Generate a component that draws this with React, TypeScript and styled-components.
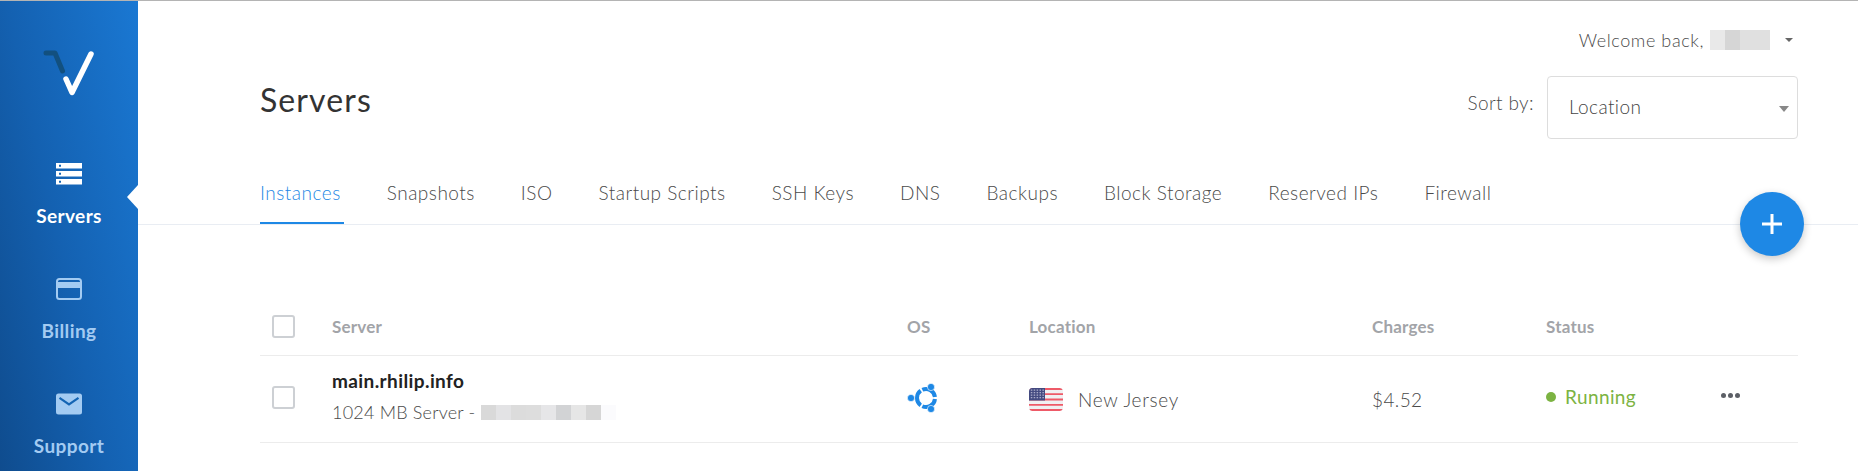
import React from "react";
import styled, { createGlobalStyle } from "styled-components";

const GlobalStyle = createGlobalStyle`
  html, body {
    margin: 0;
    padding: 0;
    background: #fff;
  }
  * {
    box-sizing: border-box;
  }
`;

const TABS = ["Instances", "Snapshots", "ISO", "Startup Scripts", "SSH Keys", "DNS", "Backups", "Block Storage", "Reserved IPs", "Firewall"];
const NAME_BLUR = ["#e9e9e9", "#d6d6d6", "#e0e0e0", "#e0e0e0"];
const IP_BLUR = ["#d9d9d9", "#e3e3e5", "#dcdcdc", "#dddddd", "#e6e6e8", "#d2d3d5", "#e6e6e6", "#d6d6d6", "#fbfbfd"];

export default function App() {
  return (
    <Shell>
      <GlobalStyle />
      <Sidebar>
        <LogoWrap>
          <Logo />
        </LogoWrap>
        <NavItem $active>
          <ServerIcon />
          <NavLabel>Servers</NavLabel>
          <ActiveArrow />
        </NavItem>
        <NavItem>
          <CardIcon />
          <NavLabel>Billing</NavLabel>
        </NavItem>
        <NavItem>
          <MailIcon />
          <NavLabel>Support</NavLabel>
        </NavItem>
      </Sidebar>
      <Main>
        <Head>
          <UserRow>
            <Welcome>Welcome back,</Welcome>
            <BlurStrip $height={20}>
              {NAME_BLUR.map((c, i) => (
                <BlurCell key={i} $tone={c} />
              ))}
            </BlurStrip>
            <UserCaret />
          </UserRow>
          <TitleRow>
            <Title>Servers</Title>
            <SortWrap>
              <SortLabel>Sort by:</SortLabel>
              <SelectBox>
                Location
                <SelectCaret />
              </SelectBox>
            </SortWrap>
          </TitleRow>
        </Head>
        <TabBar>
          {TABS.map((t, i) => (
            <Tab key={t} $active={i === 0}>
              {t}
            </Tab>
          ))}
        </TabBar>
        <AddButton>
          <svg width="20" height="20" viewBox="0 0 20 20">
            <path d="M10 0v20M0 10h20" stroke="#fff" strokeWidth="3" />
          </svg>
        </AddButton>
        <Table>
          <HeaderRow>
            <CheckBox />
            <HeaderCell>Server</HeaderCell>
            <HeaderCell>OS</HeaderCell>
            <HeaderCell>Location</HeaderCell>
            <HeaderCell>Charges</HeaderCell>
            <HeaderCell>Status</HeaderCell>
            <span />
          </HeaderRow>
          <BodyRow>
            <CheckBox $raised />
            <ServerCell>
              <ServerName>main.rhilip.info</ServerName>
              <ServerMeta>
                1024 MB Server -
                <BlurStrip $height={15}>
                  {IP_BLUR.map((c, i) => (
                    <BlurCell key={i} $tone={c} />
                  ))}
                </BlurStrip>
              </ServerMeta>
            </ServerCell>
            <UbuntuIcon />
            <LocationCell>
              <UsFlag />
              New Jersey
            </LocationCell>
            <PlainCell>$4.52</PlainCell>
            <StatusCell>
              <StatusDot />
              Running
            </StatusCell>
            <MoreDots>
              <i />
              <i />
              <i />
            </MoreDots>
          </BodyRow>
        </Table>
      </Main>
    </Shell>
  );
}

function Logo() {
  return (
    <svg width="60" height="54" viewBox="0 0 60 54" fill="none">
      <path d="M7 5h9l7.500 18" stroke="#12507f" strokeWidth="5" strokeLinecap="round" strokeLinejoin="round" />
      <path d="M27 31l6 13.500L52 6" stroke="#fff" strokeWidth="5.500" strokeLinecap="round" strokeLinejoin="round" />
    </svg>
  );
}

function ServerIcon() {
  return (
    <IconSvg viewBox="0 0 26 22">
      <path fill="#fff" d="M0 0h26v5.500H0zM0 8h26v5.500H0zM0 16h26v5.500H0z" />
      <path fill="#1465b4" d="M3 1.800h2v2H3zM3 9.800h2v2H3zM3 17.800h2v2H3z" />
    </IconSvg>
  );
}

function CardIcon() {
  return (
    <IconSvg viewBox="0 0 26 22">
      <rect x="1" y="1" width="24" height="20" rx="2.500" fill="none" stroke="#a3cbf2" strokeWidth="2" />
      <path fill="#a3cbf2" d="M2 4h22v6H2z" />
    </IconSvg>
  );
}

function MailIcon() {
  return (
    <IconSvg viewBox="0 0 26 22">
      <rect width="26" height="21" y="0.500" rx="2.500" fill="#a3cbf2" />
      <path d="M3.500 4.800l9.500 6.500 9.500-6.500" fill="none" stroke="#1465b4" strokeWidth="2.200" />
    </IconSvg>
  );
}

function UbuntuIcon() {
  return (
    <UbuntuSvg viewBox="0 0 30 30" fill="none">
      <g stroke="#1e88e5" strokeWidth="4">
        <path d="M27.950 14.060A9 9 0 0 0 15.340 6.780" />
        <path d="M13.710 7.720A9 9 0 0 0 13.710 22.280" />
        <path d="M27.950 15.940A9 9 0 0 1 15.340 23.220" />
      </g>
      <g fill="#1e88e5" stroke="#fff" strokeWidth="0.600">
        <circle cx="4" cy="15" r="3.600" />
        <circle cx="24" cy="4" r="3.600" />
        <circle cx="24" cy="26" r="3.600" />
      </g>
    </UbuntuSvg>
  );
}

function UsFlag() {
  const rows = [0, 1, 2, 3];
  const cols = [0, 1, 2, 3, 4];
  return (
    <FlagSvg viewBox="0 0 34 23">
      <rect width="34" height="23" rx="3.500" fill="#f0f0f2" />
      <path fill="#ee5a68" d="M3.500 0h27A3.500 3.500 0 0 1 33.700 2H.300A3.500 3.500 0 0 1 3.500 0zM0 5.300h34V7H0zM0 10.600h34v1.800H0zM0 15.900h34v1.800H0zM.300 21h33.400a3.500 3.500 0 0 1-3.200 2h-27A3.500 3.500 0 0 1 .300 21z" />
      <path fill="#434a80" d="M3.500 0H16v12.400H0V3.500A3.500 3.500 0 0 1 3.500 0z" />
      {rows.map((r) =>
        cols.map((c) => <rect key={`${r}-${c}`} x={1.800 + c * 2.900} y={1.500 + r * 2.500} width="1.500" height="1.300" fill="#a9aac8" />)
      )}
    </FlagSvg>
  );
}

const Shell = styled.div`
  display: flex;
  height: 100vh;
  overflow: hidden;
  border-top: 1px solid #b4b4b4;
  font-family: "Lato", "Liberation Sans", sans-serif;
  font-weight: 300;
  font-size: 19px;
  letter-spacing: 0.4px;
`;

const Sidebar = styled.nav`
  flex: 0 0 138px;
  display: flex;
  flex-direction: column;
  background: linear-gradient(78deg, #0f4c8e 0%, #1461b1 45%, #1a78d3 100%);
`;

const LogoWrap = styled.div`
  flex: 0 0 162px;
  padding: 47px 0 0 39px;
`;

const NavItem = styled.a<{ $active?: boolean }>`
  position: relative;
  flex: 0 0 115px;
  display: flex;
  flex-direction: column;
  align-items: center;
  color: ${(p) => (p.$active ? "#fff" : "#a3cbf2")};
`;

const NavLabel = styled.span`
  margin-top: 19px;
  line-height: 24px;
  font-weight: 700;
`;

const IconSvg = styled.svg`
  display: block;
  width: 26px;
  height: 22px;
`;

const ActiveArrow = styled.span`
  position: absolute;
  right: 0;
  top: 22px;
  border-style: solid;
  border-width: 12px 11px 12px 0;
  border-color: transparent #fff transparent transparent;
`;

const Main = styled.main`
  position: relative;
  flex: 1;
  min-width: 0;
  color: #4a4a4a;
`;

const Head = styled.header`
  padding: 0 60px 0 122px;
`;

const UserRow = styled.div`
  display: flex;
  justify-content: flex-end;
  align-items: center;
  height: 24px;
  margin-top: 27px;
  padding-right: 5px;
`;

const Welcome = styled.span`
  margin-right: 6px;
  font-size: 18px;
  letter-spacing: 0.6px;
`;

const BlurStrip = styled.span<{ $height: number }>`
  display: inline-flex;
  height: ${(p) => p.$height}px;
`;

const BlurCell = styled.span<{ $tone: string }>`
  width: 15px;
  background: ${(p) => p.$tone};
`;

const UserCaret = styled.span`
  margin-left: 15px;
  border-style: solid;
  border-width: 4px 4px 0;
  border-color: #666 transparent transparent;
`;

const TitleRow = styled.div`
  display: flex;
  justify-content: space-between;
  align-items: flex-start;
  margin-top: 24px;
`;

const Title = styled.h1`
  margin: 6px 0 0;
  font-size: 32px;
  line-height: 36px;
  font-weight: 400;
  letter-spacing: 1.1px;
  color: #333;
`;

const SortWrap = styled.div`
  display: flex;
  align-items: flex-start;
  gap: 13px;
`;

const SortLabel = styled.span`
  margin-top: 15px;
  line-height: 24px;
`;

const SelectBox = styled.div`
  position: relative;
  width: 251px;
  height: 63px;
  padding-left: 21px;
  border: 1px solid #ddd;
  border-radius: 4px;
  line-height: 60px;
  color: #444;
`;

const SelectCaret = styled.span`
  position: absolute;
  right: 8px;
  top: 29px;
  border-style: solid;
  border-width: 6px 5px 0;
  border-color: #888 transparent transparent;
`;

const TabBar = styled.div`
  display: flex;
  gap: 43px;
  margin-top: 42px;
  padding-left: 122px;
  border-bottom: 1px solid #e9edf3;
`;

const Tab = styled.a<{ $active?: boolean }>`
  height: 43px;
  padding-right: 3px;
  line-height: 24px;
  letter-spacing: 0.5px;
  color: ${(p) => (p.$active ? "#1e88e5" : "#4a4a4a")};
  border-bottom: 2px solid ${(p) => (p.$active ? "#1e88e5" : "transparent")};
`;

const AddButton = styled.button`
  position: absolute;
  top: 191px;
  right: 54px;
  display: flex;
  align-items: center;
  justify-content: center;
  width: 64px;
  height: 64px;
  padding: 0;
  border: 0;
  border-radius: 50%;
  background: #1e88e5;
  box-shadow: 0 3px 8px rgba(0, 0, 0, 0.22);
`;

const Table = styled.section`
  margin: 75px 60px 0 122px;
  --columns: 72px 575px 122px 343px 174px 175px 1fr;
`;

const HeaderRow = styled.div`
  display: grid;
  grid-template-columns: var(--columns);
  align-items: center;
  height: 56px;
  padding-bottom: 3px;
  border-bottom: 1px solid #ececec;
`;

const BodyRow = styled.div`
  display: grid;
  grid-template-columns: var(--columns);
  align-items: center;
  height: 87px;
  border-bottom: 1px solid #ececec;
`;

const CheckBox = styled.span<{ $raised?: boolean }>`
  display: block;
  width: 23px;
  height: 23px;
  margin: ${(p) => (p.$raised ? "-3px 0 0 12px" : "0 0 0 12px")};
  border: 2px solid #cdd0d4;
  border-radius: 3px;
`;

const HeaderCell = styled.span`
  font-size: 17px;
  font-weight: 700;
  letter-spacing: 0.2px;
  color: #a2a4a8;
`;

const ServerCell = styled.div`
  display: flex;
  flex-direction: column;
  gap: 9px;
  margin-top: -5px;
`;

const ServerName = styled.span`
  line-height: 22px;
  font-weight: 700;
  color: #222;
`;

const ServerMeta = styled.span`
  display: flex;
  align-items: center;
  gap: 6px;
  font-size: 18px;
  line-height: 22px;
  letter-spacing: 0.2px;
`;

const UbuntuSvg = styled.svg`
  width: 30px;
  height: 30px;
  margin-top: -3px;
`;

const LocationCell = styled.span`
  display: flex;
  align-items: center;
  gap: 15px;
  letter-spacing: 0.7px;
`;

const FlagSvg = styled.svg`
  width: 34px;
  height: 23px;
`;

const PlainCell = styled.span``;

const StatusCell = styled.span`
  display: flex;
  align-items: center;
  gap: 9px;
  margin-top: -5px;
  font-weight: 400;
  color: #7cb342;
`;

const StatusDot = styled.span`
  width: 10px;
  height: 10px;
  border-radius: 50%;
  background: #7cb342;
`;

const MoreDots = styled.span`
  display: flex;
  gap: 2px;
  margin-top: -8px;
  i {
    width: 5px;
    height: 5px;
    border-radius: 50%;
    background: #5c5f66;
  }
`;
